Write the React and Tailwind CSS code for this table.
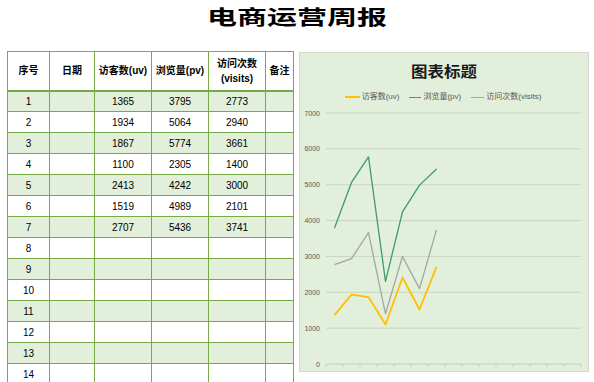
const rows = [
  [1, 1365, 3795, 2773],
  [2, 1934, 5064, 2940],
  [3, 1867, 5774, 3661],
  [4, 1100, 2305, 1400],
  [5, 2413, 4242, 3000],
  [6, 1519, 4989, 2101],
  [7, 2707, 5436, 3741],
  [8], [9], [10], [11], [12], [13], [14],
];

const font = { fontFamily: '"Liberation Sans", "Noto Sans CJK SC", sans-serif' };

// chart helpers (svg coordinates)
const yOf = (v) => 261 - (v * 251) / 7000;
const xOf = (i) => 34.5 + 17 * i;
const pts = (key) =>
  rows
    .filter((r) => r.length > 1)
    .map((r, i) => `${xOf(i)},${yOf(r[key])}`)
    .join(' ');

function Chart() {
  const grid = [0, 1000, 2000, 3000, 4000, 5000, 6000, 7000];
  return (
    <div className="w-[290px] h-[320px] mt-[1px] ml-[5px] bg-[#e2efda] border border-[#d4d9d0] flex flex-col shrink-0">
      <div className="h-[38px] flex items-center justify-center">
        <span className="text-[15px] font-bold text-[#1a1a1a] inline-block scale-x-110">图表标题</span>
      </div>
      <div className="h-[12px] flex items-center justify-center gap-[10px] text-[8px] text-[#595959] pr-[2px]">
        <div className="flex items-center gap-[2px]">
          <span className="w-[15px] h-[2px] bg-[#ffc000]" />
          <span>访客数(uv)</span>
        </div>
        <div className="flex items-center gap-[2px]">
          <span className="w-[12px] h-[1px] bg-[#3f9a6c]" />
          <span>浏览量(pv)</span>
        </div>
        <div className="flex items-center gap-[2px]">
          <span className="w-[13px] h-[1px] bg-[#a5a5a5]" />
          <span>访问次数(visits)</span>
        </div>
      </div>
      <svg width="288" height="268" className="block">
        {grid.map((g) => (
          <g key={g}>
            {g > 0 && (
              <line x1="26" x2="281" y1={yOf(g)} y2={yOf(g)} stroke="#c9d6c1" strokeWidth="1" />
            )}
            <text x="20" y={yOf(g) + 2.5} textAnchor="end" fontSize="7" fill="#595959" fontFamily="Liberation Sans, sans-serif">
              {g}
            </text>
          </g>
        ))}
        <line x1="26" x2="281" y1={yOf(0)} y2={yOf(0)} stroke="#c4ccbe" strokeWidth="1" />
        {Array.from({ length: 16 }).map((_, k) => (
          <line key={k} x1={26 + 17 * k} x2={26 + 17 * k} y1={yOf(0)} y2={yOf(0) + 3} stroke="#c4ccbe" strokeWidth="1" />
        ))}
        <polyline points={pts(2)} fill="none" stroke="#3f9a6c" strokeWidth="1.3" strokeLinejoin="round" />
        <polyline points={pts(3)} fill="none" stroke="#a5a5a5" strokeWidth="1.3" strokeLinejoin="round" />
        <polyline points={pts(1)} fill="none" stroke="#ffc000" strokeWidth="1.8" strokeLinejoin="round" />
      </svg>
    </div>
  );
}

export default function App() {
  return (
    <div className="w-[594px] h-[382px] overflow-hidden bg-white text-black" style={font}>
      <div className="h-[51px] flex justify-center pt-[5px]">
        <h1 className="text-[20px] leading-[26px] font-bold inline-block scale-x-150 h-[26px]">电商运营周报</h1>
      </div>
      <div className="flex items-start pl-[7px]">
        <table className="border-collapse table-fixed w-[286px] text-[10px] shrink-0">
          <colgroup>
            <col className="w-[42px]" />
            <col className="w-[45px]" />
            <col className="w-[57px]" />
            <col className="w-[57px]" />
            <col className="w-[57px]" />
            <col className="w-[28px]" />
          </colgroup>
          <thead>
            <tr className="h-[39px] border-b-2 border-[#77a947] font-bold">
              {['序号', '日期', '访客数(uv)', '浏览量(pv)', null, '备注'].map((h, i) => (
                <th key={i} className="border border-[#77a947] p-0 font-bold text-center leading-[15px] border-b-2">
                  {h === null ? (
                    <>
                      访问次数
                      <br />
                      (visits)
                    </>
                  ) : (
                    h
                  )}
                </th>
              ))}
            </tr>
          </thead>
          <tbody>
            {rows.map((r, idx) => (
              <tr key={r[0]} className={`h-[21px] ${idx % 2 === 0 ? 'bg-[#e2efda]' : 'bg-white'}`}>
                <td className="border border-[#77a947] p-0 text-center">{r[0]}</td>
                <td className="border border-[#77a947] p-0" />
                <td className="border border-[#77a947] p-0 text-center">{r[1]}</td>
                <td className="border border-[#77a947] p-0 text-center">{r[2]}</td>
                <td className="border border-[#77a947] p-0 text-center">{r[3]}</td>
                <td className="border border-[#77a947] p-0" />
              </tr>
            ))}
          </tbody>
        </table>
        <Chart />
      </div>
    </div>
  );
}
